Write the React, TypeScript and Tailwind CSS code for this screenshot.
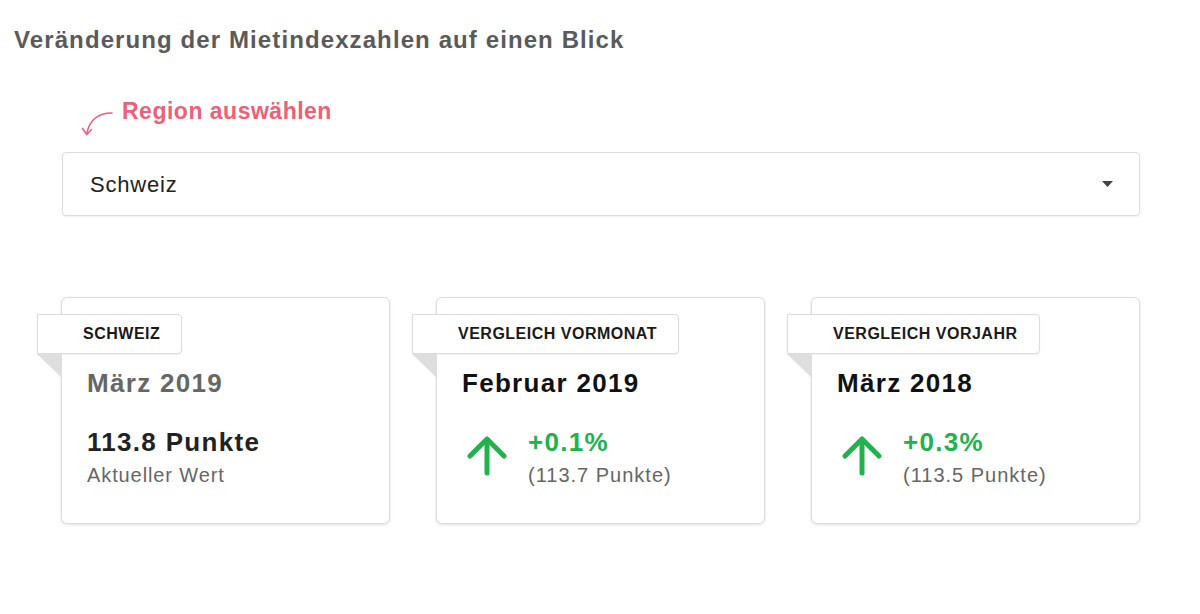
import React from 'react';

type Card = {
  tag: string;
  title: string;
  muted?: boolean;
  value: string;
  sub: string;
  trend?: boolean;
};

const cards: Card[] = [
  { tag: 'Schweiz', title: 'März 2019', muted: true, value: '113.8 Punkte', sub: 'Aktueller Wert' },
  { tag: 'Vergleich Vormonat', title: 'Februar 2019', value: '+0.1%', sub: '(113.7 Punkte)', trend: true },
  { tag: 'Vergleich Vorjahr', title: 'März 2018', value: '+0.3%', sub: '(113.5 Punkte)', trend: true },
];

const UpArrow = () => (
  <svg width="40" height="40" viewBox="0 0 40 40" fill="none" stroke="#22b24c" strokeWidth="5" strokeLinecap="round" strokeLinejoin="round">
    <path d="M20 37V4" />
    <path d="M3 20 20 3 37 20" />
  </svg>
);

const IndexCard = ({ tag, title, muted, value, sub, trend }: Card) => (
  <div className="relative h-[227px] w-[329px] rounded-[6px] border border-[#dcdcdc] bg-white pl-[25px] pt-[70px] shadow-[0_1px_3px_rgba(0,0,0,0.12)]">
    {/* tag badge sticking out of the card */}
    <div className="absolute left-[-25px] top-[16px]">
      <div className="flex h-[40px] items-center rounded-r-[4px] border border-[#dcdcdc] bg-white pl-[45px] pr-[21px] text-[16px] font-bold uppercase tracking-[0.5px] text-[#1a1a1a] shadow-[0_1px_2px_rgba(0,0,0,0.06)]">
        {tag}
      </div>
      <svg width="25" height="24" viewBox="0 0 25 24" className="block">
        <path d="M0 0H25V24Z" fill="#dedede" />
      </svg>
    </div>
    <div className={`text-[26px] font-bold leading-[30px] tracking-[1.3px] ${muted ? 'text-[#666]' : 'text-[#111]'}`}>{title}</div>
    {trend ? (
      <div className="mt-[29px] flex items-start">
        <div className="ml-[5px] mt-[9px] w-[61px]">
          <UpArrow />
        </div>
        <div>
          <div className="text-[26px] font-bold leading-[30px] tracking-[1.3px] text-[#22b24c]">{value}</div>
          <div className="mt-[5px] text-[20px] leading-[26px] tracking-[1px] text-[#666]">{sub}</div>
        </div>
      </div>
    ) : (
      <div className="mt-[29px]">
        <div className="text-[26px] font-bold leading-[30px] tracking-[1.3px] text-[#222]">{value}</div>
        <div className="mt-[5px] text-[20px] leading-[26px] tracking-[0.9px] text-[#666]">{sub}</div>
      </div>
    )}
  </div>
);

export default function App() {
  return (
    <div className="h-[614px] w-[1200px] bg-white font-[family-name:'Liberation_Sans',Arial,sans-serif]">
      <h1 className="pl-[14px] pt-[24px] text-[24px] font-bold leading-[32px] tracking-[1.1px] text-[#5a5a5a]">
        Veränderung der Mietindexzahlen auf einen Blick
      </h1>

      <div className="mt-[40px] flex items-start pl-[78px]">
        <svg width="40" height="34" viewBox="0 0 40 34" fill="none" stroke="#ee5f78" strokeWidth="1.6" strokeLinecap="round" strokeLinejoin="round" className="mt-[10px]">
          <path d="M34 7C22 7 12 12 9 27" />
          <path d="M4.5 22.5 8.8 28.5 13.5 23.5" />
        </svg>
        <div className="ml-[4px] text-[23px] font-bold leading-[30px] tracking-[0.5px] text-[#ee5f78]">Region auswählen</div>
      </div>

      <div className="ml-[62px] mt-[12px] flex h-[64px] w-[1078px] items-center justify-between rounded-[4px] border border-[#dcdcdc] bg-white pl-[27px] pr-[26px] shadow-[0_1px_2px_rgba(0,0,0,0.06)]">
        <span className="text-[22px] tracking-[0.8px] text-[#222]">Schweiz</span>
        <svg width="11" height="6" viewBox="0 0 11 6">
          <path d="M0 0H11L5.5 6Z" fill="#444" />
        </svg>
      </div>

      <div className="ml-[61px] mt-[81px] flex gap-[46px]">
        {cards.map((c) => (
          <IndexCard key={c.tag} {...c} />
        ))}
      </div>
    </div>
  );
}
